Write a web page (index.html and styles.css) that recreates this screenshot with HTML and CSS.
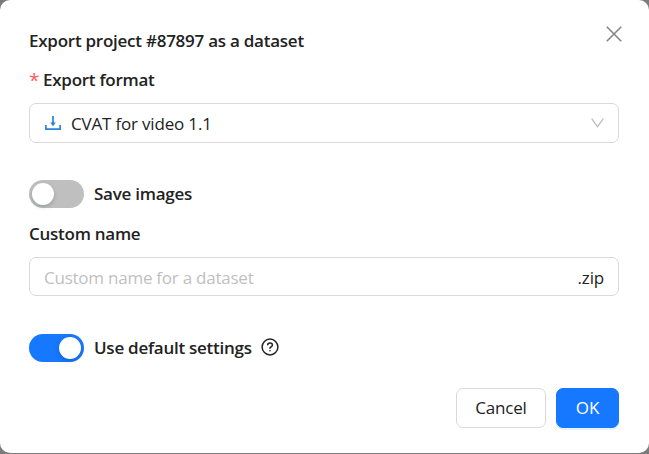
FILE: index.html
```html
<!DOCTYPE html>
<html lang="en">
<head>
<meta charset="utf-8">
<title>Export dataset</title>
<link rel="stylesheet" href="styles.css">
</head>
<body>
<form class="modal">
  <header class="modal-header">
    <h1 class="title">Export project #87897 as a dataset</h1>
    <button class="close" type="button" aria-label="Close">
      <svg width="16" height="16" viewBox="0 0 16 16"><path d="M.8.8l14.4 14.4M15.2.8L.8 15.2"/></svg>
    </button>
  </header>
  <div class="label label-format"><span class="required">*</span><span>Export format</span></div>
  <div class="field select">
    <svg class="download" width="16" height="15" viewBox="0 0 16 15"><path d="M.9 9v4.2h14.2V9M8 0v8"/><path class="tip" d="M5.2 6.6h5.6L8 10.3z"/></svg>
    <span class="value">CVAT for video 1.1</span>
    <svg class="chevron" width="13" height="10" viewBox="0 0 13 10"><path d="M.7.6l5.8 8 5.8-8"/></svg>
  </div>
  <div class="switch-row row-images">
    <span class="switch"><i class="knob"></i></span>
    <span class="label">Save images</span>
  </div>
  <div class="label label-name">Custom name</div>
  <div class="field">
    <span class="placeholder">Custom name for a dataset</span>
    <span class="suffix">.zip</span>
  </div>
  <div class="switch-row row-defaults">
    <span class="switch on"><i class="knob"></i></span>
    <span class="label">Use default settings</span>
    <svg class="help" width="18" height="18" viewBox="0 0 18 18"><circle cx="9" cy="9" r="7.9"/><path d="M6.6 7.2c0-1.4 1-2.3 2.4-2.3s2.4.9 2.4 2.1c0 1.1-.7 1.6-1.5 2-.7.3-.9.7-.9 1.3v.5"/><circle class="dot" cx="9" cy="12.8" r=".8"/></svg>
  </div>
  <footer class="actions">
    <button class="btn" type="button">Cancel</button>
    <button class="btn primary" type="button">OK</button>
  </footer>
</form>
</body>
</html>
```
FILE: styles.css
```css
* { box-sizing: border-box; }
body {
  margin: 0;
  height: 454px;
  overflow: hidden;
  background: #7b7b7b;
  color: #222;
  font: 17px/26px "Open Sans", "Noto Sans", sans-serif;
  letter-spacing: -.18px;
  white-space: nowrap;
}
.modal {
  height: 453px;
  padding: 24px 30px 0 29px;
  background: #fff;
  border-radius: 10px;
}
svg { display: block; flex: none; fill: none; stroke: currentColor; }
.modal-header { display: flex; justify-content: space-between; height: 42px; }
.title { margin: 4px 0 0; font-size: 17px; line-height: 26px; font-weight: 600; letter-spacing: -.25px; }
.close {
  width: 16px; height: 16px; margin: 2px -3px 0 0; padding: 0;
  border: 0; background: none; color: #858585;
}
.close svg { stroke-width: 1.6; }
.label { font-weight: 600; letter-spacing: -.26px; }
.label-format { display: flex; height: 37px; padding-top: 1px; }
.required { width: 14px; color: #ff5b5e; font-weight: 400; font-size: 19px; }
.field {
  display: flex; align-items: center;
  height: 40px; padding: 2px 14px 0;
  border: 1px solid #d9d9d9; border-radius: 7px;
}
.select { padding-left: 15px; }
.download { margin: -2px 10px 0 0; color: #2b82d9; stroke-width: 1.7; }
.download .tip { fill: currentColor; stroke: none; }
.chevron { margin: -2px 0 0 auto; color: #bdbdbd; stroke-width: 1.3; }
.switch-row { display: flex; align-items: center; height: 28px; }
.row-images { margin-top: 37px; }
.switch {
  display: flex; align-items: center; flex: none;
  width: 55px; height: 28px; margin-right: 10px; padding: 0 3px;
  border-radius: 14px; background: #bfbfbf;
}
.switch.on { justify-content: flex-end; background: #1677ff; }
.knob { width: 22px; height: 22px; border-radius: 50%; background: #fff; box-shadow: 0 2px 4px rgba(0, 35, 11, .2); }
.label-name { margin-top: 13px; height: 36px; }
.label-name + .field { height: 39px; }
.placeholder { color: #bfbfbf; letter-spacing: -.24px; }
.suffix { margin-left: auto; }
.row-defaults { margin-top: 38px; }
.help { margin: -2px 0 0 9px; stroke-width: 1.5; }
.help .dot { fill: currentColor; stroke: none; }
.actions { display: flex; justify-content: flex-end; gap: 10px; margin-top: 26px; }
.btn {
  width: 90px; height: 40px; padding: 0;
  border: 1px solid #d9d9d9; border-radius: 7px;
  background: #fff; color: #222; font: inherit; letter-spacing: inherit;
}
.primary {
  width: 63px; border-color: #1677ff; background: #1677ff; color: #fff;
  letter-spacing: 0; box-shadow: 0 2px 0 rgba(5, 145, 255, .1);
}
```
